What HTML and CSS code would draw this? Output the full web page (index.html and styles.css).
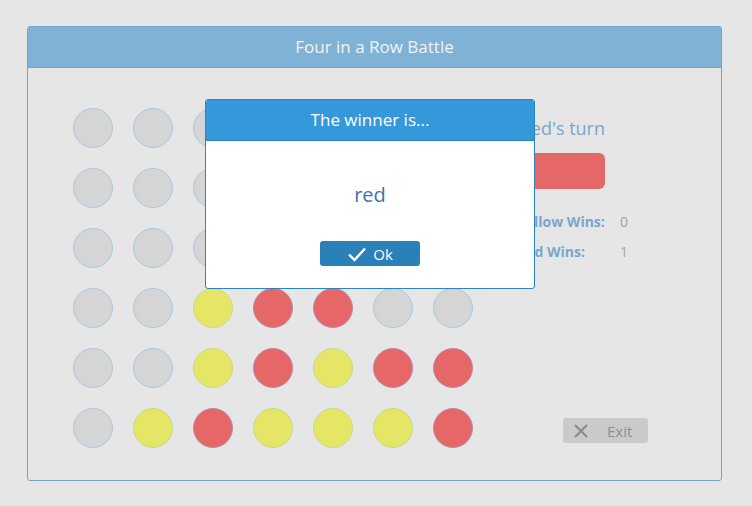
FILE: index.html
```html
<!DOCTYPE html>
<html lang="en">
<head>
    <meta charset="UTF-8">
    <meta name="viewport" content="width=device-width, initial-scale=1.0">
    <title>Four in a Row Battle</title>
    <link rel="stylesheet" href="styles.css">
</head>
<body>
    <div class="panel">
        <div class="panel-header">Four in a Row Battle</div>
        <div class="panel-body">
            <div class="board" id="board"></div>
            <div class="side">
                <div class="turn">
                    <div class="turn-text">Red's turn</div>
                    <div class="turn-bar"></div>
                </div>
                <table class="score">
                    <tr><td class="label">Yellow Wins:</td><td class="value">0</td></tr>
                    <tr><td class="label">Red Wins:</td><td class="value red">1</td></tr>
                </table>
                <button class="exit-btn" type="button">
                    <svg width="16" height="16" viewBox="0 0 16 16"><path d="M2 2 L14 14 M14 2 L2 14" stroke="#8a8a8a" stroke-width="2" fill="none"/></svg>
                    <span>Exit</span>
                </button>
            </div>
        </div>
    </div>

    <div class="modal">
        <div class="modal-header">The winner is...</div>
        <div class="modal-body">
            <div class="winner">red</div>
            <button class="ok-btn" type="button">
                <svg width="20" height="16" viewBox="0 0 20 16"><path d="M2 8.5 L7.5 14 L18 2.5" stroke="#fff" stroke-width="2.4" fill="none"/></svg>
                <span>Ok</span>
            </button>
        </div>
    </div>

    <script>
        const rows = [
            'ggggggg',
            'ggggggg',
            'ggggggg',
            'ggyrrgg',
            'ggyryrr',
            'gyryyyr'
        ];
        const names = { g: 'empty', y: 'yellow', r: 'red' };
        const board = document.getElementById('board');
        rows.forEach(function (row) {
            for (let i = 0; i < row.length; i++) {
                const cell = document.createElement('div');
                cell.className = 'cell ' + names[row[i]];
                board.appendChild(cell);
            }
        });
    </script>
</body>
</html>
```

FILE: styles.css
```css
body {
    font-family: "Open Sans", "Noto Sans", sans-serif;
    margin: 0;
    padding: 26px 0 0 27px;
    background-color: #e6e6e6;
}

.panel {
    width: 695px;
    height: 455px;
    box-sizing: border-box;
    border: 1px solid #6fa5c9;
    border-radius: 3px;
    display: flex;
    flex-direction: column;
}

.panel-header {
    height: 40px;
    background-color: #80b2d5;
    border-bottom: 1px solid #6fa5c9;
    color: #eef4f9;
    font-size: 17px;
    line-height: 40px;
    text-align: center;
}

.panel-body {
    flex: 1;
    min-height: 0;
    display: flex;
    padding: 40px 0 32px 45px;
}

.board {
    display: grid;
    grid-template-columns: repeat(7, 40px);
    grid-auto-rows: 40px;
    gap: 20px;
    align-content: start;
}

.cell {
    box-sizing: border-box;
    border-radius: 50%;
    border: 1px solid #a6c9e2;
}

.cell.empty {
    background-color: #d5d5d5;
}

.cell.yellow {
    background-color: #e5e566;
    border-color: #c9d98a;
}

.cell.red {
    background-color: #e66767;
    border-color: #b98aa6;
}

.side {
    flex: 1;
    display: flex;
    flex-direction: column;
    align-items: flex-start;
    padding-left: 30px;
    padding-right: 72px;
}

.turn {
    width: 102px;
}

.turn-text {
    color: #7aa6cb;
    font-size: 18px;
    text-align: right;
    line-height: 24px;
    margin-top: 8px;
}

.turn-bar {
    height: 36px;
    margin-top: 13px;
    background-color: #e66767;
    border-radius: 6px;
}

.score {
    margin-top: 17px;
    margin-left: 14px;
    border-collapse: collapse;
    font-size: 14px;
    color: #7aa6cb;
}

.score td {
    padding: 0;
    height: 30px;
}

.score .label {
    font-weight: bold;
    width: 95px;
    padding-right: 8px;
}

.score .value {
    color: #8ca5be;
}

.score .value.red {
    color: #c09aa2;
}

.exit-btn {
    margin-top: auto;
    margin-bottom: 5px;
    margin-left: 60px;
    width: 85px;
    height: 25px;
    border: none;
    border-radius: 3px;
    background-color: #c9cacc;
    color: #8e8e8e;
    font-family: inherit;
    font-size: 15px;
    display: flex;
    align-items: center;
    padding: 0 0 0 10px;
    gap: 18px;
}

.modal {
    position: absolute;
    left: 205px;
    top: 99px;
    width: 330px;
    height: 190px;
    box-sizing: border-box;
    border: 1px solid #2a84c4;
    border-radius: 3px;
    background: #fff;
    overflow: hidden;
}

.modal-header {
    height: 40px;
    background-color: #3598db;
    border-bottom: 1px solid #2a84c4;
    color: #fff;
    font-size: 17px;
    line-height: 40px;
    text-align: center;
}

.modal-body {
    display: flex;
    flex-direction: column;
    align-items: center;
}

.winner {
    margin-top: 40px;
    font-size: 20px;
    color: #3b74b1;
    line-height: 28px;
}

.ok-btn {
    margin-top: 32px;
    width: 100px;
    height: 25px;
    border: none;
    border-radius: 3px;
    background-color: #2a80b9;
    color: #fff;
    font-family: inherit;
    font-size: 15px;
    display: flex;
    align-items: center;
    justify-content: center;
    gap: 6px;
    padding: 0;
}
```
